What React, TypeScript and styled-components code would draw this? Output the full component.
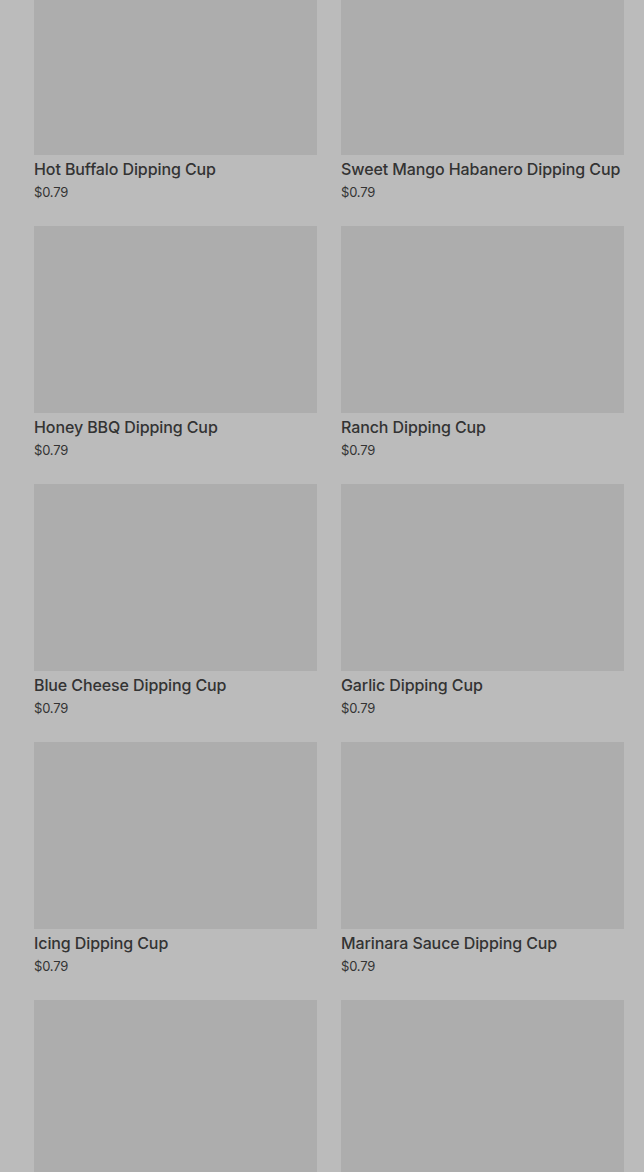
import * as React from 'react';
import styled, { createGlobalStyle } from 'styled-components';

type Product = {
  name: string;
  price: string;
};

const products: Product[] = [
  { name: 'Hot Buffalo Dipping Cup', price: '$0.79' },
  { name: 'Sweet Mango Habanero Dipping Cup', price: '$0.79' },
  { name: 'Honey BBQ Dipping Cup', price: '$0.79' },
  { name: 'Ranch Dipping Cup', price: '$0.79' },
  { name: 'Blue Cheese Dipping Cup', price: '$0.79' },
  { name: 'Garlic Dipping Cup', price: '$0.79' },
  { name: 'Icing Dipping Cup', price: '$0.79' },
  { name: 'Marinara Sauce Dipping Cup', price: '$0.79' },
  { name: 'Caesar Dipping Cup', price: '$0.79' },
  { name: 'Cheddar Dipping Cup', price: '$0.79' },
];

const GlobalStyle = createGlobalStyle`
  html, body {
    margin: 0;
    padding: 0;
    background: #bbbbbb;
    overflow: hidden;
  }
  body {
    font-family: Inter, Roboto, "Liberation Sans", sans-serif;
    color: #333333;
  }
`;

const App: React.FC = () => {
  return (
    <>
      <GlobalStyle />
      <StyledPage>
        <StyledGrid>
          {products.map((p) => (
            <ProductCard key={p.name}>
              <ProductImage />
              <ProductName>{p.name}</ProductName>
              <ProductPrice>{p.price}</ProductPrice>
            </ProductCard>
          ))}
        </StyledGrid>
      </StyledPage>
    </>
  );
};

const StyledPage = styled.main`
  height: 1172px;
  overflow: hidden;
  padding: 0 20px 0 34px;
`;

const StyledGrid = styled.div`
  display: grid;
  grid-template-columns: 283px 283px;
  column-gap: 24px;
  row-gap: 24px;
  margin-top: -32px;
`;

const ProductCard = styled.article`
  display: flex;
  flex-direction: column;
`;

const ProductImage = styled.div`
  height: 187px;
  background: #adadad;
`;

const ProductName = styled.h3`
  margin: 2px 0 0;
  font-size: 16px;
  line-height: 24px;
  font-weight: 500;
  letter-spacing: -0.1px;
  color: #333333;
  white-space: nowrap;
`;

const ProductPrice = styled.span`
  padding-top: 1px;
  font-size: 13px;
  line-height: 20px;
  letter-spacing: -0.2px;
  color: #333333;
`;

export default App;
